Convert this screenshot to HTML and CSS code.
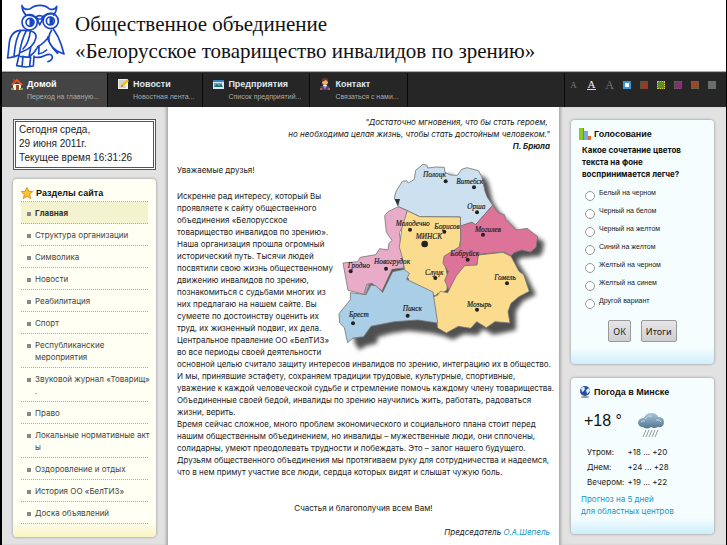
FILE: index.html
```html
<!DOCTYPE html>
<html lang="ru">
<head>
<meta charset="utf-8">
<title>Белорусское товарищество инвалидов по зрению</title>
<link rel="stylesheet" href="styles.css">
</head>
<body>
<div class="page">
<header class="header">
  <svg class="owl" viewBox="18 9 180 195" fill="none" stroke="#1746c8" stroke-width="5" stroke-linecap="round" stroke-linejoin="round" aria-hidden="true">
    <path d="M66 17c4 9 12 14 25 9 16-13 42-13 56 0 10 5 20 1 23-7 0 11-4 20-9 26M66 17c0 11 4 19 10 26"/>
    <circle cx="89" cy="67" r="23"/><circle cx="152" cy="63" r="23"/>
    <circle cx="90" cy="67" r="12"/><circle cx="151" cy="63" r="12"/>
    <path d="M91 57v20c9-2 9-18 0-20zM151 53v20c9-2 9-18 0-20z" fill="#1746c8"/>
    <path d="M79 46q19-2 31 10M160 41q-22-2-34 12M109 50l10 25 12-24q-11-8-22-1M114 57h11"/>
    <path d="M60 91C38 94 28 110 27 138L23 174q19-2 34-9M62 92C48 110 44 144 42 168M79 92C68 112 61 140 57 168M60 91h20q30 1 28 22-7 31-45 44M91 93q-4 36-22 54"/>
    <path d="M160 87q15 21 23 45l9 30-21-9q-25-18-28-42M155 91q-13 18-6 38 8 15 24 31M149 106q-14 22-36 34"/>
    <path d="M57 166l-7 31 27 4 23-3 2-30M62 170l30 2-3 25M69 169l-3 31M92 142l-5 29q17-12 27-31M117 140l-1 22q12-1 24-12M103 171q14 4 30-4 22-9 24 4 0 10-13 14"/>
  </svg>
  <h1 class="site-title">Общественное объединение<br>«Белорусское товарищество инвалидов по зрению»</h1>
</header>
<nav class="nav">
  <a class="tab active" href="#">
    <svg class="tab-icon" viewBox="0 0 12 12" aria-hidden="true"><path d="M2 6h8v6H2z" fill="#eee"/><path d="M0 6.500 6 .5l6 6-1.500 1L6 3.500 1.500 7.500z" fill="#e5531d"/><path d="M2 1h2v3H2z" fill="#b63b13"/><path d="M5 7h3v5H5z" fill="#a34624"/><path d="M0 10h3v2H0zM9 10h3v2H9z" fill="#79a83b"/></svg>
    <span class="tab-text"><b>Домой</b><small>Переход на главную...</small></span></a>
  <a class="tab" href="#">
    <svg class="tab-icon" viewBox="0 0 12 12" aria-hidden="true"><path d="M1 1h10v10H1z" fill="#f1f1e7"/><path d="M2 3h6M2 5h5M2 7h3M2 9h7" stroke="#a8b6bf"/><path d="m4 9 1-3 5-5 2 2-5 5z" fill="#f4bd24"/><path d="m4 9 1-2 1 1z" fill="#444"/></svg>
    <span class="tab-text"><b>Новости</b><small>Новостная лента...</small></span></a>
  <a class="tab" href="#">
    <svg class="tab-icon" viewBox="0 0 12 12" aria-hidden="true"><path d="M1 2h11v9H1z" fill="#d9e9f2"/><path d="M1 2h11v2H1z" fill="#3482c3"/><path d="M2 5h8v4H2z" fill="#58a5cf"/><path d="m2 9 3-3 2 2 2-2 2 3z" fill="#286a60"/></svg>
    <span class="tab-text"><b>Предприятия</b><small>Список предприятий...</small></span></a>
  <a class="tab" href="#">
    <svg class="tab-icon" viewBox="0 0 12 12" aria-hidden="true"><path d="M1 12q0-5 5-5t5 5z" fill="#354b9d"/><path d="m4 7 2 4 2-4z" fill="#fff"/><circle cx="6" cy="4" r="3" fill="#f0b17a"/><path d="M3 4q-1-4 3-4t3 4L7 2z" fill="#70391f"/><path d="M6 8v3" stroke="#d7301f"/><path d="M1 10h2v2H1zM9 10h2v2H9z" fill="#c8562c"/></svg>
    <span class="tab-text"><b>Контакт</b><small>Связаться с нами...</small></span></a>
  <div class="tools">
    <button class="size small" type="button">A</button>
    <button class="size medium" type="button">A</button>
    <button class="size large" type="button">A</button>
    <button class="swatch sky" type="button" aria-label="Голубой"></button>
    <button class="swatch brown" type="button" aria-label="Коричневый"></button>
    <button class="swatch green" type="button" aria-label="Зелёный"></button>
    <button class="swatch purple" type="button" aria-label="Фиолетовый"></button>
    <button class="swatch rust" type="button" aria-label="Красный"></button>
    <button class="swatch gray" type="button" aria-label="Серый"></button>
  </div>
</nav>
<div class="columns">
  <aside class="side left">
    <div class="clock">Сегодня среда,<br>29 июня 2011г.<br>Текущее время 16:31:26</div>
    <section class="panel cream">
      <h2 class="panel-title"><svg class="panel-icon" viewBox="0 0 12 12" aria-hidden="true"><path d="m6 .5 1.700 3.700 4 .4-3 2.700.9 4.200L6 9.300l-3.600 2.200.9-4.200-3-2.700 4-.4z" fill="#fbc52b" stroke="#df7b14" stroke-width=".8"/></svg>Разделы сайта</h2>
      <ul class="menu">
        <li class="current"><a href="#">Главная</a></li>
        <li><a href="#">Структура организации</a></li>
        <li><a href="#">Символика</a></li>
        <li><a href="#">Новости</a></li>
        <li><a href="#">Реабилитация</a></li>
        <li><a href="#">Спорт</a></li>
        <li><a href="#">Республиканские<br>мероприятия</a></li>
        <li><a href="#">Звуковой журнал «Товарищ»<br>.</a></li>
        <li><a href="#">Право</a></li>
        <li><a href="#">Локальные нормативные акт<br>ы</a></li>
        <li><a href="#">Оздоровление и отдых</a></li>
        <li><a href="#">История ОО «БелТИЗ»</a></li>
        <li><a href="#">Доска объявлений</a></li>
      </ul>
    </section>
  </aside>
  <main class="article">
    <blockquote class="quote">"Достаточно мгновения, что бы стать героем,&nbsp;<br>но необходима целая жизнь, чтобы стать достойным человеком."<br><b>П. Брюла</b></blockquote>
    <svg class="map" viewBox="0 171 645 579" role="img" aria-label="Карта Беларуси">
      <defs><filter id="soft" x="-10%" y="-10%" width="120%" height="120%"><feGaussianBlur stdDeviation="7"/></filter></defs>
      <path filter="url(#soft)" transform="translate(20 20)" fill="#333" opacity=".85" d="M240 282 250 235 258 226 266 202 284 191 296 202 328 190 347 213 367 214 396 191 430 200 440 217 450 262 457 280 473 304 513 345 545 380 575 373 608 395 603 425 595 436 536 442 527 452 555 495 583 552 545 570 523 600 523 658 480 668 454 672 425 655 407 674 368 670 333 687 308 677 270 668 200 660 150 668 108 680 106 698 73 706 52 718 38 695 36 670 42 630 64 600 66 558 100 465 190 430 200 308z"/>
      <g stroke="#777" stroke-width="2.500" stroke-linejoin="round">
        <path fill="#cce0ef" d="M190 308 178 282 183 262 202 232 215 230 220 237 238 226 242 199 264 181 276 184 278 192 302 189 328 190 330 205 347 213 367 214 380 196 396 191 430 200 440 217 450 262 457 280 473 304 422 362 410 355 377 366 376 339 254 338 217 320z"/>
        <path fill="#e9acc8" d="m149 335 10-12 31-15 27 12-8 40-16 25 8 60 6 47-36 4-30 65-31-23-15 3-8 30-48-12-15-82 44-4 8-13 46-8 12-18 25 4 3-20 9-9-17-24z"/>
        <path fill="#fbdc8f" d="m217 320 37 18 122 1 1 68-4 25-46 36 12 55-3 34-17 14-11-3-6 8-86-42 6-9-16-11 2-22-6-32-9-30 8-60z"/>
        <path fill="#dd7398" d="m377 366 33-11 12 7 51-58 17 23 18 5 4 14 32 32 33-5 31 25-5 32-16 14-28-6-22 8-9 9-21-11-77 7-4 34-37 6-27 48-21 18-12-28 11-26-16-25 3-21 48-30 2-24z"/>
        <path fill="#fbdc8f" d="m389 485 37-2 4-30 74-8 24 12 24 45 14 10 17 50-31 16-24 20-9 25 6 34-45-4-26 18-29-18-18 20-37-6-36 20-26-15-14-93 13-5 9-12 22 4 26-51z"/>
        <path fill="#a9cee5" d="m46 566 47 6 15-29 15 2 20 20 30-62 34-7 16 12-8 18 79 38 14 93-60-9-70 5-70 14-22 31-32 4-16 14-10-45-14-14-2-28 34-42z"/>
      </g>
      <path d="M179 285h16l-6 22z" fill="#333"/>
      <g fill="#222"><circle cx="332" cy="232" r="6"/><circle cx="417" cy="250" r="6"/><circle cx="426" cy="325" r="6"/><circle cx="225" cy="377" r="6"/><circle cx="328" cy="383" r="6"/><circle cx="444" cy="392" r="6"/><circle cx="269" cy="420" r="10"/><circle cx="398" cy="467" r="6"/><circle cx="47" cy="502" r="6"/><circle cx="153" cy="494" r="6"/><circle cx="301" cy="522" r="6"/><circle cx="516" cy="538" r="6"/><circle cx="426" cy="617" r="6"/><circle cx="218" cy="635" r="6"/><circle cx="54" cy="658" r="6"/></g>
      <g class="cities"><text x="264" y="220">Полоцк</text><text x="364" y="239">Витебск</text><text x="397" y="314">Орша</text><text x="182" y="366">Молодечно</text><text x="298" y="374">Борисов</text><text x="420" y="383">Могилев</text><text x="242" y="405">МИНСК</text><text x="346" y="457">Бобруйск</text><text x="38" y="492">Гродно</text><text x="117" y="479">Новогрудок</text><text x="270" y="512">Слуцк</text><text x="478" y="527">Гомель</text><text x="396" y="608">Мозырь</text><text x="203" y="622">Пинск</text><text x="42" y="640">Брест</text></g>
    </svg>
    <p class="greeting">Уважаемые друзья!</p>
    <p>Искренне рад интересу, который Вы<br>проявляете к сайту общественного<br>объединения «Белорусское<br>товарищество инвалидов по зрению».<br>Наша организация прошла огромный<br>исторический путь. Тысячи людей<br>посвятили свою жизнь общественному<br>движению инвалидов по зрению,<br>познакомиться с судьбами многих из<br>них предлагаю на нашем сайте. Вы<br>сумеете по достоинству оценить их<br>труд, их жизненный подвиг, их дела.<br>Центральное правление ОО «БелТИЗ»<br>во все периоды своей деятельности<br>основной целью считало защиту интересов инвалидов по зрению, интеграцию их в общество.<br>И мы, принявшие эстафету, сохраняем традиции трудовые, культурные, спортивные,<br>уважение к каждой человеческой судьбе и стремление помочь каждому члену товарищества.<br>Объединенные своей бедой, инвалиды по зрению научились жить, работать, радоваться<br>жизни, верить.<br>Время сейчас сложное, много проблем экономического и социального плана стоит перед<br>нашим общественным объединением, но инвалиды – мужественные люди, они сплочены,<br>солидарны, умеют преодолевать трудности и побеждать. Это – залог нашего будущего.<br>Друзьям общественного объединения мы протягиваем руку для сотрудничества и надеемся,<br>что в нем примут участие все люди, сердца которых видят и слышат чужую боль.</p>
    <p class="wish">Счастья и благополучия всем Вам!</p>
    <p class="sign">Председатель <a href="#">О.А.Шепель</a></p>
  </main>
  <aside class="side right">
    <section class="panel sky-panel">
      <h2 class="panel-title"><svg class="panel-icon" viewBox="0 0 12 12" aria-hidden="true"><path d="M0 0h5v12H0z" fill="#8ac926"/><path d="M5 3h4v9H5z" fill="#78a9df"/><path d="M9 8h3v4H9z" fill="#e8672b"/><path d="M4 0h1v12H4z" fill="#669d16"/></svg>Голосование</h2>
      <form class="poll">
        <fieldset>
          <legend>Какое сочетание цветов<br>текста на фоне<br>воспринимается легче?</legend>
          <label><input type="radio" name="vote">Белый на черном</label>
          <label><input type="radio" name="vote">Черный на белом</label>
          <label><input type="radio" name="vote">Черный на желтом</label>
          <label><input type="radio" name="vote">Синий на желтом</label>
          <label><input type="radio" name="vote">Желтый на черном</label>
          <label><input type="radio" name="vote">Желтый на синем</label>
          <label><input type="radio" name="vote">Другой вариант</label>
        </fieldset>
        <div class="actions"><button type="button">ОК</button><button type="button">Итоги</button></div>
      </form>
    </section>
    <section class="panel sky-panel">
      <h2 class="panel-title"><svg class="panel-icon" viewBox="0 0 12 12" aria-hidden="true"><ellipse cx="6" cy="11" rx="4" ry="1" fill="#999"/><circle cx="6" cy="5" r="5" fill="#2b4c9b"/><path d="M2 2q3-2 4 0L5 5 3 6zM7 4l3-2 1 3-3 3z" fill="#dcecff"/></svg>Погода в Минске</h2>
      <div class="now"><span>+18 °</span>
        <svg class="cloud" viewBox="0 0 26 26" aria-hidden="true"><defs><linearGradient id="c" x2="0" y2="1"><stop stop-color="#a9c4da"/><stop offset="1" stop-color="#53758f"/></linearGradient></defs><path d="M5 15Q0 15 0 10q1-4 6-4 2-5 7-5 6 0 7 4 6 0 6 5 0 6-6 5-4 2-7 0-4 3-8 0z" fill="url(#c)"/><path d="M7 7q3-4 7-3M3 10q2-2 4-1M18 8q4-1 5 2" stroke="#c9dceb" fill="none"/><path d="m8 18-3 7m6-7-3 7m6-7-3 7m6-7-3 7m6-7-3 7" stroke="#999"/></svg>
      </div>
      <table class="forecast">
        <tr><th scope="row">Утром:</th><td>+18 ... +20</td></tr>
        <tr><th scope="row">Днем:</th><td>+24 ... +28</td></tr>
        <tr><th scope="row">Вечером:</th><td>+19 ... +22</td></tr>
      </table>
      <a class="more" href="#">Прогноз на 5 дней<br>для областных центров</a>
    </section>
  </aside>
</div>
</div>
</body>
</html>
```
FILE: styles.css
```css
* { box-sizing: border-box; }
html { background: #000; }
body { margin: 0; font: 8px/12px Inter, "Liberation Sans", Arial, sans-serif; color: #222; }
h1, h2, p, ul, blockquote, fieldset { margin: 0; padding: 0; border: 0; min-width: 0; }
a { color: inherit; text-decoration: none; }
button { font: inherit; cursor: pointer; }
.page { margin: 0 1px 0 2px; min-height: 100vh; display: flex; flex-direction: column; background: #e2e2e2; }

.header { display: flex; gap: 9px; height: 72px; padding: 3px 4px 0; background: #fff; border-bottom: 1px solid #aaa; }
.owl { width: 60px; height: 65px; flex: none; }
.site-title { padding-top: 8px; font: 21px/27px "Liberation Serif", "Times New Roman", serif; color: #111; white-space: nowrap; }

.nav { display: flex; height: 35px; background: #262626; border-top: 1px solid #333; font-family: "Liberation Sans", Arial, sans-serif; }
.tab { display: flex; gap: 4px; padding: 5px 8px 0 9px; border-right: 1px solid #080808; color: #aaa; white-space: nowrap; }
.tab.active { background: #444; }
.tab-icon { width: 12px; height: 12px; flex: none; }
.tab-text b { display: block; font-size: 9px; line-height: 12px; color: #dde8ee; }
.tab.active b { color: #fff; }
.tab-text small { display: block; font-size: 7px; line-height: 14px; }
.tools { display: flex; align-items: center; margin-left: auto; padding: 0 10px 11px 4px; border-left: 1px solid #080808; gap: 9px; }
.tools button { padding: 0; border: 0; background: none; }
.size { width: 9px; font-family: "Liberation Serif", serif; color: #777; }
.tools .small { font-size: 9px; }
.tools .medium { font-size: 11px; line-height: 10px; color: #eee; border-bottom: 1px solid #ddd; }
.tools .large { font-size: 12px; }
.tools .swatch { width: 8px; height: 8px; }
.tools .sky { background: #fff; border: 2px solid #3b94d8; }
.tools .brown { background: #8d3e29; border: 1px dotted #5a5040; }
.tools .green { background: #5e8a32; border: 1px dotted #d3c936; }
.tools .purple { background: #7c3270; border: 1px dotted #665; }
.tools .rust { background: #a04522; border: 1px dotted #665; }
.tools .gray { background: #6a6e6d; }

.columns { flex: 1; display: grid; grid-template-columns: 166px minmax(0, 1fr) 167px; }
.side { display: flex; flex-direction: column; }
.left { padding: 12px 12px 8px 11px; gap: 9px; box-shadow: inset -3px 0 3px -1px #aaa; }
.right { padding: 13px 12px 10px 12px; gap: 14px; box-shadow: inset 3px 0 3px -1px #aaa; }
.clock { padding: 1px 3px 2px; background: #fff; border: 3px double #555; font: 10px/14px "Liberation Sans", Arial, sans-serif; white-space: nowrap; }
.panel { border-radius: 4px; padding: 7px 8px 13px; box-shadow: 0 0 3px #888; }
.cream { background: linear-gradient(to top, #f8f5c2, #fffff3 16px); }
.sky-panel { background: linear-gradient(to top, #cdeefb, #f5fdff 16px); }
.panel-title { display: flex; align-items: center; gap: 3px; height: 14px; font: bold 9px/14px "Liberation Sans", Arial, sans-serif; color: #111; white-space: nowrap; }
.panel-icon { width: 12px; height: 12px; flex: none; }
.menu { margin-top: 1px; list-style: none; border-top: 1px dotted #aaa; }
.menu li { position: relative; padding: 5px 0 4px 14px; border-bottom: 1px dotted #aaa; color: #444; white-space: nowrap; }
.menu li::before { content: ""; position: absolute; left: 6px; top: 10px; width: 4px; height: 4px; background: #888; }
.menu .current { background: #f3f3cf; font-weight: bold; color: #333; }

.article { padding: 9px 9px 6px; background: #fff; white-space: nowrap; }
.quote { text-align: right; font-style: italic; }
.map { float: right; width: 215px; height: 193px; margin-top: 9px; }
.cities { font: italic 22px "Liberation Serif", serif; fill: #222; stroke: #222; stroke-width: 0.5px; }
.greeting { margin: 12px 0 14px; }
.wish { margin-top: 24px; text-align: center; }
.sign { margin-top: 12px; text-align: right; font-style: italic; }
.sign a, .more { color: #1698c6; }

.poll { padding: 3px 3px 0; }
.poll legend { padding: 0; margin-bottom: 7px; font-weight: bold; color: #111; white-space: nowrap; }
.poll label { display: flex; align-items: flex-start; gap: 4px; height: 18px; padding-left: 3px; font: 7px/12px "Liberation Sans", Arial, sans-serif; white-space: nowrap; }
.poll input { appearance: none; width: 10px; height: 10px; margin: 4px 0 0; border: 1px solid #999; border-radius: 50%; background: #fff; }
.actions { display: flex; justify-content: center; gap: 10px; padding: 7px 0 9px; }
.actions button { height: 22px; padding: 0 4px; border: 1px solid #999; border-radius: 2px; background: linear-gradient(#e6e6e8, #cfcfd3); font: 9px "Noto Sans", sans-serif; color: #222; }
.now { display: flex; gap: 16px; padding: 13px 5px 6px; font: 16px/18px "Liberation Sans", Arial, sans-serif; color: #111; }
.cloud { width: 26px; height: 26px; }
.forecast { margin-left: 8px; border-collapse: collapse; white-space: nowrap; }
.forecast th, .forecast td { padding: 0; height: 15px; font-weight: normal; text-align: left; }
.forecast th { padding-right: 3px; }
.more { display: block; margin-top: 4px; padding: 0 0 4px 2px; white-space: nowrap; }
```
